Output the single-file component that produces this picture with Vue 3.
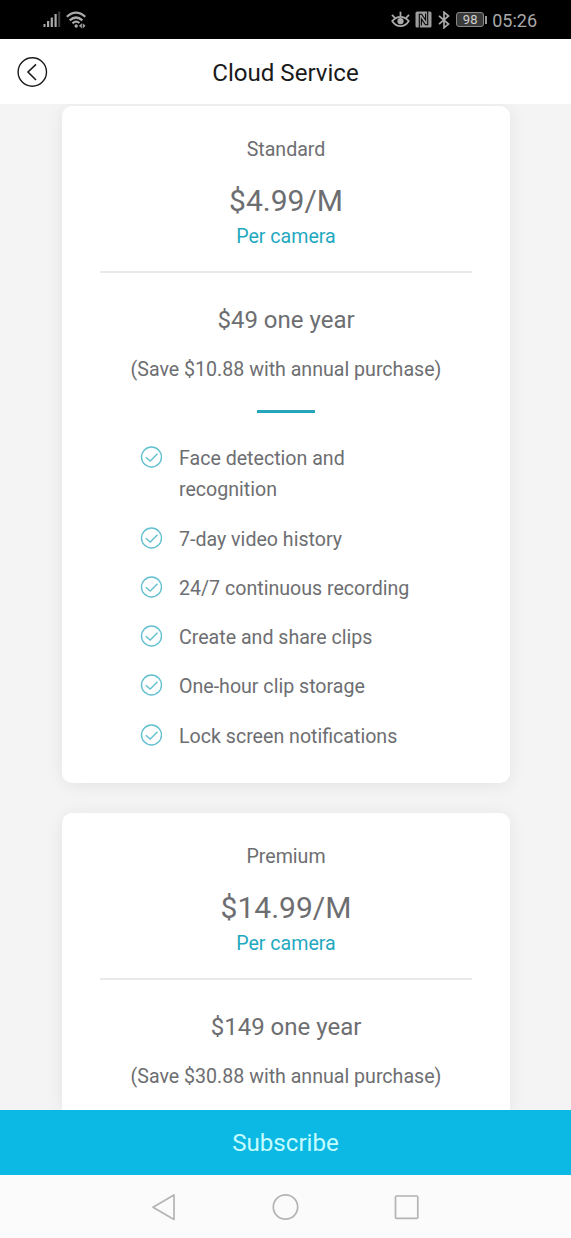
<script setup>
const plans = [
  {
    name: 'Standard',
    price: '$4.99/M',
    year: '$49 one year',
    save: '(Save $10.88 with annual purchase)',
    features: [
      'Face detection and recognition',
      '7-day video history',
      '24/7 continuous recording',
      'Create and share clips',
      'One-hour clip storage',
      'Lock screen notifications',
    ],
  },
  {
    name: 'Premium',
    price: '$14.99/M',
    year: '$149 one year',
    save: '(Save $30.88 with annual purchase)',
    features: [],
  },
]
</script>

<template>
  <div class="screen">
    <div class="status">
      <svg class="signal" width="18" height="17" viewBox="0 0 18 17" fill="#aaa">
        <rect x="0.5" y="13" width="2" height="3" />
        <rect x="4" y="10" width="2.2" height="6" />
        <rect x="7.7" y="6.5" width="2.2" height="9.5" />
        <rect x="11.5" y="3" width="2.2" height="13" />
        <rect x="15.2" y="0.5" width="2" height="15.5" fill="#3c3c3c" />
      </svg>
      <svg class="wifi" width="21" height="18" viewBox="0 0 21 18" fill="none" stroke="#aaa" stroke-width="2.2">
        <path d="M0.8 5.7Q10 -2.6 19.3 5.7M3.7 9.4Q10 3.6 16.4 9.4M6.5 12.4Q10 9.2 13.5 12" />
        <circle cx="10.2" cy="15" r="1.7" fill="#aaa" stroke="none" />
        <path d="M15.9 12.2L12.9 14.8L15.9 17.4ZM16.7 12.2L19.7 14.8L16.7 17.4Z" fill="#999" stroke="none" />
      </svg>
      <span class="spacer"></span>
      <svg class="eye" width="19" height="17" viewBox="0 0 19 17" fill="none" stroke="#aaa" stroke-width="1.8">
        <path d="M1.2 10Q5 5.8 9.5 5.8T17.8 10Q14.5 15.2 9.5 15.2T1.2 10Z" />
        <path d="M9.5 0.8V5.5M1 3.8L4 7M18 3.8L15 7" />
        <circle cx="9.5" cy="10.2" r="3.1" fill="#aaa" stroke="none" />
      </svg>
      <svg class="nfc" width="17" height="17" viewBox="0 0 17 17">
        <rect x="0.5" y="0.5" width="16" height="16" rx="1.5" fill="#9c9c9c" />
        <path d="M4.3 17V3.2L6.6 3.2L10.6 9V2.5M12.7 0V13.8L10.4 13.8L6.4 8V14.5" fill="none" stroke="#000" stroke-width="1.1" />
      </svg>
      <svg class="bt" width="12" height="18" viewBox="0 0 12 18" fill="none" stroke="#aaa" stroke-width="1.7">
        <path d="M1 4.8L10.5 13L6 16.8V1.2L10.5 5L1 13.2" />
      </svg>
      <span class="battery">98</span>
      <span class="tip"></span>
      <span class="time">05:26</span>
    </div>

    <header class="header">
      <svg class="back" width="32" height="32" viewBox="0 0 32 32" fill="none" stroke="#1c1c1c">
        <circle cx="16.3" cy="16" r="14.2" stroke-width="1.4" />
        <path d="M20 8.3L12 16L20 24" stroke-width="1.6" />
      </svg>
      <h1>Cloud Service</h1>
    </header>

    <main class="content">
      <section v-for="plan in plans" :key="plan.name" class="card">
        <div class="name">{{ plan.name }}</div>
        <div class="price">{{ plan.price }}</div>
        <div class="per">Per camera</div>
        <div class="divider"></div>
        <div class="year">{{ plan.year }}</div>
        <div class="save">{{ plan.save }}</div>
        <div class="accent"></div>
        <ul v-if="plan.features.length">
          <li v-for="f in plan.features" :key="f">
            <svg width="22" height="22" viewBox="0 0 22 22" fill="none" stroke="#62c0cf" stroke-width="1.4">
              <circle cx="11.5" cy="11" r="10" />
              <path d="M5.8 11.2L10.2 15L17.5 7.8" />
            </svg>
            <span>{{ f }}</span>
          </li>
        </ul>
      </section>
    </main>

    <button class="subscribe">Subscribe</button>

    <nav class="nav">
      <svg width="290" height="32" viewBox="0 0 290 32" fill="none" stroke="#b4b4b4" stroke-width="1.7" stroke-linejoin="round">
        <path d="M33 4V28.5L12 16.2Z" />
        <circle cx="144.5" cy="16" r="12.2" />
        <rect x="254.5" y="5" width="22.3" height="22.3" rx="1" />
      </svg>
    </nav>
  </div>
</template>

<style>
body { margin: 0; }
</style>

<style scoped>
.screen {
  width: 571px;
  height: 1238px;
  display: flex;
  flex-direction: column;
  overflow: hidden;
  font-family: Roboto, "Liberation Sans", sans-serif;
  background: #fff;
  color: #6d6e71;
}
.status {
  flex: none;
  box-sizing: border-box;
  height: 39px;
  padding: 0 34px 0 43px;
  display: flex;
  align-items: center;
  background: #000;
  color: #a8a8a8;
}
.wifi { margin-left: 5px; }
.spacer { flex: 1; }
.eye { margin-right: 1px; }
.nfc { margin-left: 4px; }
.bt { margin-left: 6px; }
.battery {
  box-sizing: border-box;
  width: 28px;
  height: 15px;
  margin-left: 6px;
  border: 1px solid #888;
  border-radius: 3px;
  background: #3a3a3a;
  color: #d0d0d0;
  font-size: 13px;
  line-height: 14px;
  text-align: center;
}
.tip { width: 2px; height: 8px; margin-left: 1px; background: #999; }
.time { margin-left: 5px; font-size: 18px; line-height: 37px; padding-top: 1px; }
.header {
  flex: none;
  box-sizing: border-box;
  height: 65px;
  padding: 0 16px;
  display: grid;
  grid-template-columns: 32px 1fr 32px;
  align-items: center;
  background: #fff;
}
.header h1 {
  margin: 3px 0 0;
  text-align: center;
  font-size: 24.1px;
  font-weight: 400;
  line-height: 36px;
  color: #1a1a1a;
}
.content {
  flex: 1;
  min-height: 0;
  overflow: hidden;
  padding: 2px 61px 0 62px;
  background: #f4f4f4;
}
.card {
  box-sizing: border-box;
  height: 677px;
  margin-bottom: 30px;
  padding-top: 29px;
  border-radius: 10px;
  background: #fff;
  box-shadow: 0 2px 18px rgba(0, 0, 0, 0.07);
  text-align: center;
  font-size: 19.6px;
  line-height: 30px;
}
.card:last-child { height: 297px; margin-bottom: 0; border-radius: 10px 10px 0 0; }
.price { margin-top: 17px; font-size: 30px; line-height: 38px; }
.per { margin-top: 2px; color: #1fa9bf; }
.divider { height: 2px; margin: 19px 38px 0; background: #e9e9e9; }
.year { margin-top: 29px; font-size: 24px; line-height: 36px; }
.save { margin-top: 17px; }
.accent { width: 58px; height: 3px; margin: 25px auto 0; background: #25a5bc; }
.card:last-child .accent { display: none; }
ul { margin: 30px 0 0; padding: 0 90px 0 78px; list-style: none; text-align: left; }
li { display: flex; margin-bottom: 18px; line-height: 31.3px; }
li svg { flex: none; margin: 3px 17px 0 0; }
.subscribe {
  flex: none;
  height: 65px;
  padding: 1px 0 0;
  border: 0;
  background: #0cb8e4;
  color: #c5fcff;
  font: 24.1px/64px Roboto, "Liberation Sans", sans-serif;
}
.nav {
  flex: none;
  height: 63px;
  display: flex;
  align-items: center;
  justify-content: center;
  background: #fbfbfb;
}
</style>
